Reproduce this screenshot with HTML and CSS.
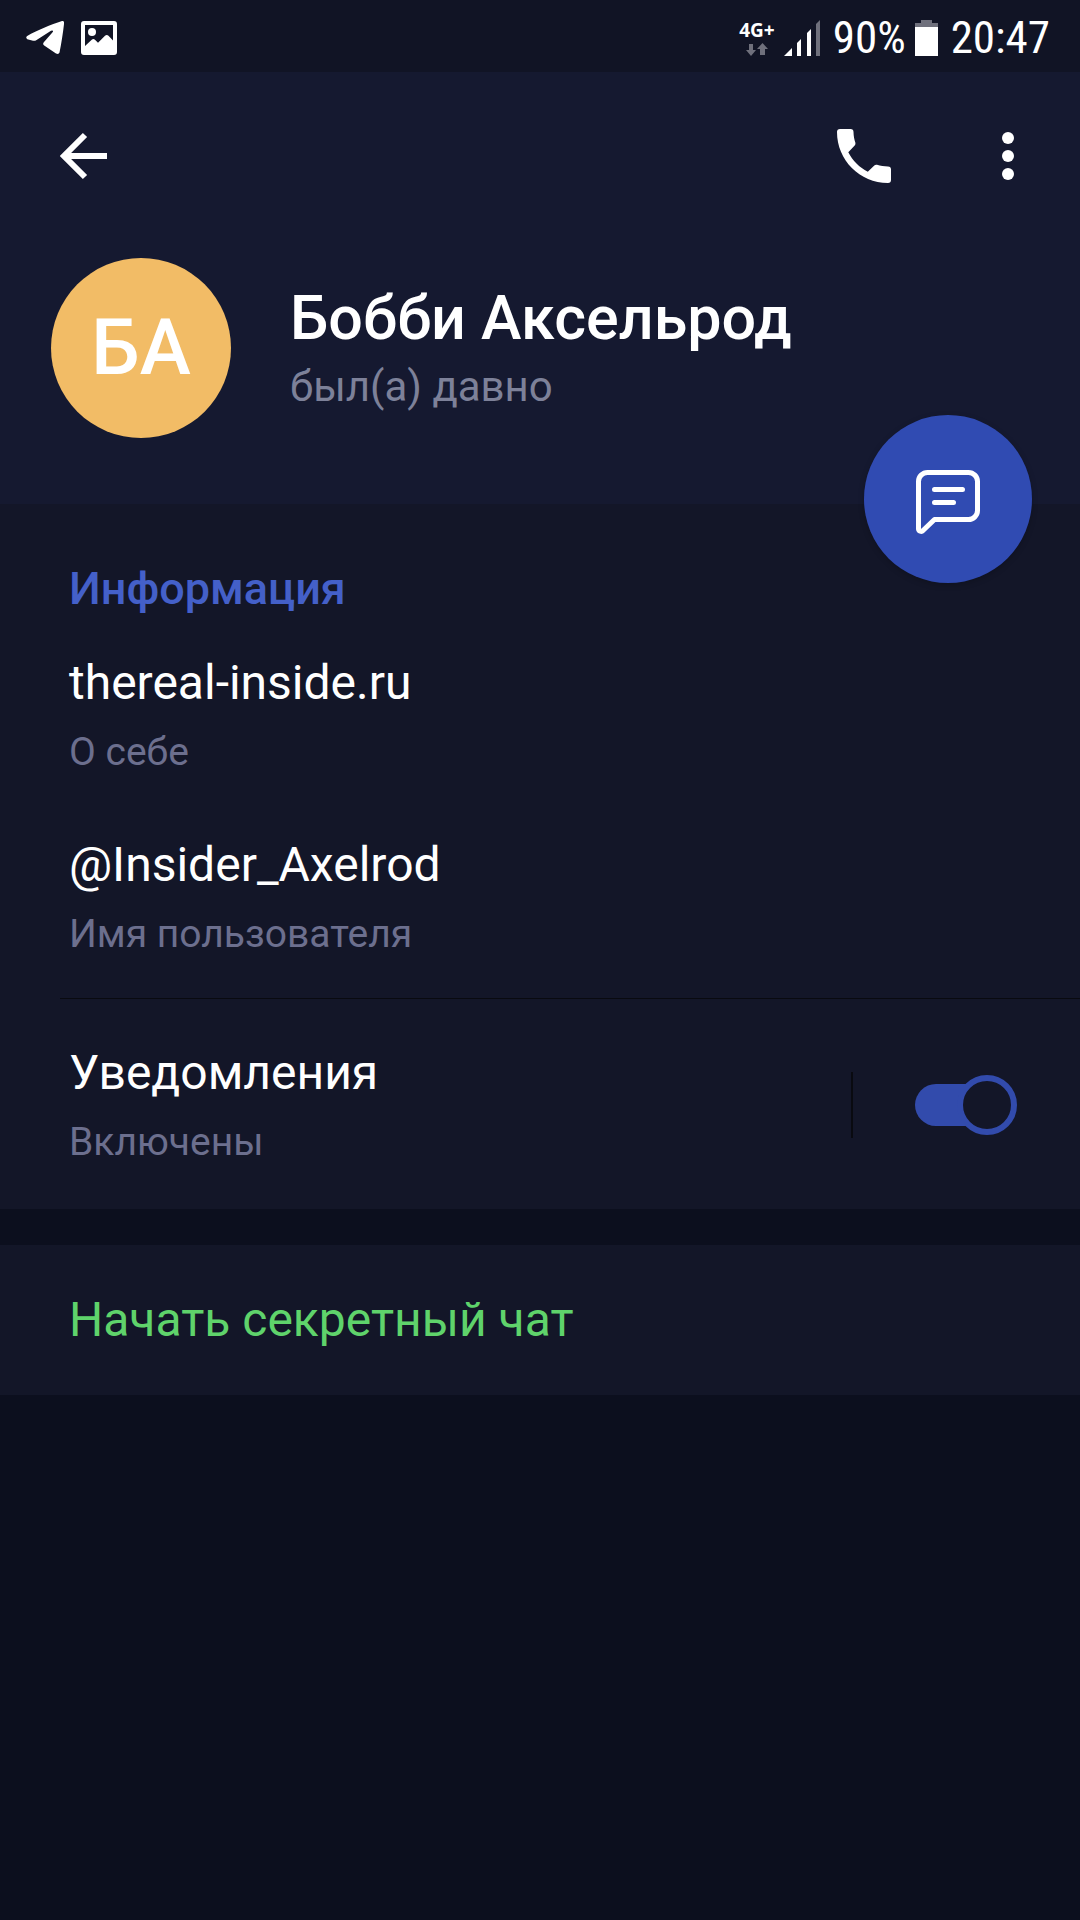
FILE: index.html
```html
<!DOCTYPE html>
<html lang="ru">
<head>
<meta charset="utf-8">
<meta name="viewport" content="width=device-width, initial-scale=1">
<title>Бобби Аксельрод</title>
<link rel="stylesheet" href="styles.css">
</head>
<body>
<div class="statusbar">
  <div class="statusbar-group notices">
    <svg width="38" height="34" viewBox="0 0 38 34" fill="#fff"><path d="M1.2 14.9C11 9.900 25 3.400 36 .1Q38.300-.3 38.100 2.200C37 12 35.500 22 33.500 31.500Q32.700 33.700 30 32.500L18.200 24.500Q16.200 22.900 18 20.900L27 10.800Q27.300 9 25 9.800L10.600 19Q8.900 20.100 7 19.800L1.300 18.300Q-.8 16.700 1.200 14.900Z"/></svg>
    <svg width="36" height="34" viewBox="0 0 36 34" fill="#fff"><path fill-rule="evenodd" d="M3 0H33Q36 0 36 3V31Q36 34 33 34H3Q0 34 0 31V3Q0 0 3 0ZM4 4V25L11 18.500Q12.500 17.500 14 18.700L17 21.800L24 14.700Q25.800 13.400 27.500 14.700L32 19.500V4Z"/><circle cx="11" cy="11" r="4"/></svg>
  </div>
  <div class="statusbar-group">
    <div class="network">
      <span class="network-type">4G+</span>
      <svg width="22" height="14" viewBox="0 0 22 14" fill="#6f707c"><path d="M3 1H7V7H10L5 13L0 7H3ZM14 12V6H11L16.500 0L22 6H19V12Z"/></svg>
    </div>
    <svg width="36" height="36" viewBox="0 0 36 36" fill="#fff"><path d="M0 36L8 28V36ZM13 36V23L17 19V36ZM23 36V13L27 9V36Z"/><path fill="#6f707c" d="M32 36V4L36 0V36Z"/></svg>
    <span class="status-text">90%</span>
    <svg width="23" height="37" viewBox="0 0 23 37"><path fill="#6f707c" d="M6 0H17V3H23V8H0V3H6Z"/><path fill="#fff" d="M0 7H23V36H0Z"/></svg>
    <span class="status-text">20:47</span>
  </div>
</div>

<header class="profile">
  <nav class="appbar">
    <button class="icon-button" aria-label="Назад">
      <svg width="72" height="72" viewBox="0 0 72 72" fill="none" stroke="#fff" stroke-width="6"><path d="M37 15L16 36L37 57M17 36H59"/></svg>
    </button>
    <div class="appbar-actions">
      <button class="icon-button" aria-label="Позвонить">
        <svg width="72" height="72" viewBox="0 0 72 72" fill="#fff"><path d="M12 9H22.500A3 3 0 0 1 25.500 12C25.600 16 26.300 19.500 27.400 22.700Q27.800 24.200 26.700 25.400L20.300 32.200C24.500 40.500 31.500 47.500 39.800 51.700L46.300 45.500Q47.500 44.400 49 44.800C52.500 45.900 56 46.400 60 46.500A3 3 0 0 1 63 49.500V60A3 3 0 0 1 60 63C31.800 63 9 40.200 9 12A3 3 0 0 1 12 9Z"/></svg>
      </button>
      <button class="icon-button" aria-label="Ещё">
        <svg width="72" height="72" viewBox="0 0 72 72" fill="#fff"><circle cx="36" cy="18" r="6"/><circle cx="36" cy="36" r="6"/><circle cx="36" cy="54" r="6"/></svg>
      </button>
    </div>
  </nav>
  <div class="identity">
    <div class="avatar">БА</div>
    <div class="identity-text">
      <h1 class="name">Бобби Аксельрод</h1>
      <p class="last-seen">был(а) давно</p>
    </div>
  </div>
  <button class="fab" aria-label="Написать сообщение">
    <svg width="72" height="72" viewBox="0 0 72 72" fill="none" stroke="#fff" stroke-width="5" stroke-linecap="round" stroke-linejoin="round"><path d="M6.500 66V18.500A9 9 0 0 1 15.500 9.500H56.500A9 9 0 0 1 65.500 18.500V47.500A9 9 0 0 1 56.500 56.500H22.500L11 67.500A2.600 2.600 0 0 1 6.500 66ZM22.500 26.500H50.500M22.500 39.500H41.500"/></svg>
  </button>
</header>

<main>
  <section class="panel">
    <div class="info">
      <h2 class="section-title">Информация</h2>
      <div class="rows">
        <div class="row">
          <p class="row-value">thereal-inside.ru</p>
          <p class="row-label">О себе</p>
        </div>
        <div class="row">
          <p class="row-value">@Insider_Axelrod</p>
          <p class="row-label">Имя пользователя</p>
        </div>
      </div>
    </div>
    <div class="notifications">
      <label class="row" for="notify">
        <span class="row-value">Уведомления</span>
        <span class="row-label">Включены</span>
      </label>
      <div class="switch-area">
        <input class="switch" type="checkbox" id="notify" checked>
      </div>
    </div>
  </section>
  <button class="panel secret-chat">Начать секретный чат</button>
</main>
</body>
</html>
```
FILE: styles.css
```css
*,
*::before,
*::after {
  box-sizing: border-box;
}

body {
  margin: 0;
  min-height: 100vh;
  background: #0c0f1e;
  color: #fff;
  font-family: Roboto, "Noto Sans", sans-serif;
}

h1, h2, p {
  margin: 0;
}

button {
  margin: 0;
  padding: 0;
  border: 0;
  background: none;
  color: inherit;
  font: inherit;
  cursor: pointer;
}

svg {
  display: block;
  flex: none;
}

/* System status bar */
.statusbar {
  display: flex;
  justify-content: space-between;
  align-items: center;
  height: 72px;
  padding: 4px 30px 0 26px;
  background: #111425;
}

.statusbar-group {
  display: flex;
  align-items: center;
  gap: 9px;
}

.notices {
  gap: 17px;
}

.network {
  display: flex;
  flex-direction: column;
  align-items: center;
  gap: 3px;
}

.network-type {
  font: 700 19px/20px "Open Sans", "Noto Sans", sans-serif;
}

.status-text {
  padding-left: 4px;
  font: 45px/54px "Roboto Condensed", "Liberation Sans Narrow", Roboto, sans-serif;
}

/* Profile header */
.profile {
  position: relative;
  padding-bottom: 66px;
  background: #151930;
}

.appbar {
  display: flex;
  justify-content: space-between;
  padding: 48px 36px 48px 48px;
}

.appbar-actions {
  display: flex;
  gap: 72px;
}

.identity {
  display: flex;
  align-items: center;
  gap: 59px;
  padding: 18px 51px 0;
}

.avatar {
  display: grid;
  place-items: center;
  flex: none;
  width: 180px;
  height: 180px;
  border-radius: 50%;
  background: #f2bc66;
  font-size: 77px;
  font-weight: 500;
}

.identity-text {
  display: flex;
  flex-direction: column;
  gap: 6px;
}

.name {
  font-size: 61px;
  font-weight: 500;
  line-height: 72px;
}

.last-seen {
  color: #7d8199;
  font-size: 42px;
  line-height: 54px;
}

.fab {
  position: absolute;
  right: 48px;
  bottom: -79px;
  display: grid;
  place-items: center;
  width: 168px;
  height: 168px;
  border-radius: 50%;
  background: #304bb2;
  box-shadow: 0 2px 6px rgba(0, 0, 0, 0.2);
}

/* Content panels */
.panel {
  background: #131628;
}

.info {
  padding: 55px 69px 40px;
}

.section-title {
  margin-bottom: 34px;
  color: #4460c9;
  font-size: 45px;
  font-weight: 500;
  line-height: 60px;
}

.rows {
  display: flex;
  flex-direction: column;
  gap: 59px;
}

.row {
  display: flex;
  flex-direction: column;
  gap: 15px;
}

.row-value {
  font-size: 48px;
  line-height: 60px;
}

.row-label {
  color: #6c6f8e;
  font-size: 39px;
  line-height: 48px;
}

.notifications {
  display: flex;
  justify-content: space-between;
  align-items: center;
  margin-left: 60px;
  padding: 44px 63px 43px 9px;
  border-top: 1px solid #090a10;
}

.switch-area {
  display: flex;
  align-items: center;
  height: 66px;
  padding-left: 62px;
  border-left: 2px solid #090a10;
}

.switch {
  appearance: none;
  display: grid;
  align-items: center;
  width: 102px;
  height: 60px;
  margin: 0;
  cursor: pointer;
}

.switch::before,
.switch::after {
  content: "";
  grid-area: 1 / 1;
}

.switch::before {
  width: 84px;
  height: 42px;
  border-radius: 21px;
  background: #324bac;
}

.switch::after {
  width: 60px;
  height: 60px;
  border: 6px solid #324bac;
  border-radius: 50%;
  background: #131628;
}

.switch:checked::after {
  justify-self: end;
}

.secret-chat {
  display: block;
  width: 100%;
  margin-top: 36px;
  padding: 45px 69px;
  color: #5fd36b;
  font-size: 48px;
  line-height: 60px;
  text-align: left;
}
```
